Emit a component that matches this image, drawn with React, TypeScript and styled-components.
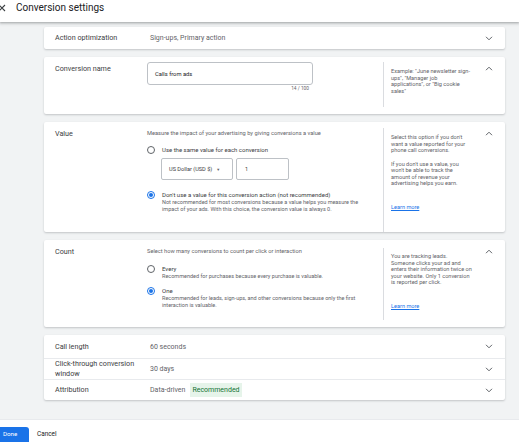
import React, { FunctionComponent, ReactElement, ReactNode } from 'react';
import styled, { createGlobalStyle } from 'styled-components';

const GlobalStyle = createGlobalStyle`
  html, body {
    margin: 0;
    padding: 0;
    background: #ffffff;
  }
  body {
    font-family: Roboto, "Liberation Sans", Arial, sans-serif;
    color: #202124;
    -webkit-font-smoothing: antialiased;
  }
`;

const Page = styled.div`
  width: 519px;
  height: 442px;
  display: flex;
  flex-direction: column;
  overflow: hidden;
  background: #f1f3f4;
`;

const Header = styled.header`
  height: 22px;
  flex-shrink: 0;
  background: #ffffff;
  display: flex;
  align-items: center;
  gap: 10px;
  box-shadow: 0 1px 2px rgba(60, 64, 67, 0.3), 0 1px 3px 1px rgba(60, 64, 67, 0.15);
  position: relative;
  z-index: 1;
`;

const CloseIcon = styled.svg`
  width: 8px;
  height: 8px;
  margin-left: -2px;
  margin-top: -7px;
`;

const Title = styled.h1`
  margin: -8px 0 0 0;
  font-size: 10px;
  font-weight: 400;
  color: #202124;
`;

const Content = styled.main`
  flex: 1;
  padding: 5px 0 0 44px;
  display: flex;
  flex-direction: column;
  gap: 8px;
`;

const Card = styled.section<{ $height: number }>`
  width: 461px;
  height: ${({ $height }): number => $height}px;
  box-sizing: border-box;
  background: #ffffff;
  border-radius: 2px;
  box-shadow: 0 1px 2px rgba(60, 64, 67, 0.25);
`;

const SummaryRow = styled.div<{ $height: number; $border?: boolean }>`
  height: ${({ $height }): number => $height}px;
  display: grid;
  grid-template-columns: 106px 1fr 30px;
  align-items: center;
  border-top: ${({ $border }): string => ($border ? '1px solid #e8eaed' : 'none')};
  box-sizing: border-box;
`;

const RowLabel = styled.div`
  padding-left: 11px;
  font-size: 7.2px;
  line-height: 10px;
  color: #3c4043;
`;

const RowValue = styled.div`
  font-size: 7px;
  color: #5f6368;
  display: flex;
  align-items: center;
  gap: 5px;
`;

const Badge = styled.span`
  background: #e6f4ea;
  color: #137333;
  padding: 3px 2px;
  font-size: 7px;
`;

const ChevronBox = styled.div<{ $top?: number }>`
  display: flex;
  justify-content: center;
  align-self: ${({ $top }): string => ($top !== undefined ? 'start' : 'center')};
  padding-top: ${({ $top }): number => $top ?? 0}px;
  padding-right: 2px;
`;

const ChevronIcon = styled.svg`
  width: 8px;
  height: 5px;
`;

const Expanded = styled.div`
  height: 100%;
  display: grid;
  grid-template-columns: 103px 236px 92px 30px;
`;

const ExpandedLabel = styled.div<{ $top: number }>`
  padding: ${({ $top }): number => $top}px 0 0 11px;
  font-size: 7.2px;
  color: #3c4043;
`;

const Main = styled.div<{ $top: number }>`
  padding: ${({ $top }): number => $top}px 16px 0 0;
  display: flex;
  flex-direction: column;
`;

const Side = styled.aside<{ $top: number; $bottom: number }>`
  margin: ${({ $top }): number => $top}px 0 ${({ $bottom }): number => $bottom}px 0;
  border-left: 1px solid #dadce0;
  padding: 0 3px 0 7px;
  display: flex;
  flex-direction: column;
  gap: 7px;
`;

const SideText = styled.p<{ $offset?: number; $width?: number }>`
  margin: ${({ $offset }): number => $offset ?? 0}px 0 0 0;
  max-width: ${({ $width }): string => ($width ? `${$width}px` : 'none')};
  font-size: 5.6px;
  line-height: 6.5px;
  color: #5f6368;
`;

const LearnMore = styled.a`
  font-size: 5.6px;
  line-height: 7px;
  color: #1a73e8;
  text-decoration: underline;
`;

const TextBox = styled.div`
  width: 166px;
  height: 23px;
  box-sizing: border-box;
  border: 1px solid #bdc1c6;
  border-radius: 3px;
  display: flex;
  align-items: center;
  padding-left: 7px;
  font-size: 5.8px;
  color: #202124;
`;

const Counter = styled.div`
  width: 162px;
  text-align: right;
  margin-top: 1px;
  font-size: 4.8px;
  color: #5f6368;
`;

const Description = styled.div`
  font-size: 5.7px;
  line-height: 8px;
  color: #5f6368;
`;

const Option = styled.div<{ $gap: number }>`
  margin-top: ${({ $gap }): number => $gap}px;
  display: grid;
  grid-template-columns: 15px 1fr;
  align-items: start;
`;

const Radio = styled.span<{ $checked?: boolean }>`
  width: 8px;
  height: 8px;
  box-sizing: border-box;
  border-radius: 50%;
  border: 1px solid ${({ $checked }): string => ($checked ? '#1a73e8' : '#5f6368')};
  display: flex;
  align-items: center;
  justify-content: center;
  margin-top: 0.5px;
  &::after {
    content: '';
    width: 4px;
    height: 4px;
    border-radius: 50%;
    background: ${({ $checked }): string => ($checked ? '#1a73e8' : 'transparent')};
  }
`;

const OptionTitle = styled.div`
  font-size: 6px;
  line-height: 9px;
  color: #3c4043;
`;

const OptionHint = styled.div`
  font-size: 5.5px;
  line-height: 7px;
  color: #5f6368;
`;

const ValueInputs = styled.div`
  margin: 4px 0 0 14px;
  display: flex;
  gap: 3px;
`;

const Select = styled.div`
  width: 72px;
  height: 22px;
  box-sizing: border-box;
  border: 1px solid #bdc1c6;
  border-radius: 2px;
  display: flex;
  align-items: center;
  padding-left: 7px;
  gap: 4px;
  font-size: 5.6px;
  color: #3c4043;
`;

const Caret = styled.span`
  font-size: 4px;
  color: #5f6368;
`;

const NumberBox = styled.div`
  width: 53px;
  height: 22px;
  box-sizing: border-box;
  border: 1px solid #bdc1c6;
  border-radius: 2px;
  display: flex;
  align-items: center;
  padding-left: 8px;
  font-size: 5.6px;
  color: #3c4043;
`;

const Footer = styled.footer`
  height: 22px;
  flex-shrink: 0;
  background: #ffffff;
  border-top: 1px solid #e8eaed;
  display: flex;
  align-items: flex-end;
  gap: 8px;
`;

const DoneButton = styled.button`
  margin-left: -6px;
  width: 35px;
  flex-shrink: 0;
  height: 15px;
  border: none;
  border-radius: 3px 3px 0 0;
  background: #1a73e8;
  color: #ffffff;
  font-family: inherit;
  font-size: 6.2px;
  text-align: left;
  padding: 0 0 1px 9px;
`;

const CancelButton = styled.button`
  height: 15px;
  border: none;
  background: transparent;
  color: #202124;
  font-family: inherit;
  font-size: 6.4px;
  padding: 0 0 1px 0;
`;

const Chevron: FunctionComponent<{ up?: boolean }> = function ({ up }): ReactElement {
  return (
    <ChevronIcon viewBox='0 0 8 5'>
      <path
        d={ up ? 'M1 4.2 L4 1.2 L7 4.2' : 'M1 0.8 L4 3.8 L7 0.8' }
        fill='none'
        stroke='#5f6368'
        strokeWidth='1'
      />
    </ChevronIcon>
  );
};

const RadioOption: FunctionComponent<{ checked?: boolean; gap: number; title: string; hint?: ReactNode }> =
  function ({ checked, gap, title, hint }): ReactElement {
    return (
      <Option $gap={ gap }>
        <Radio $checked={ checked } />
        <div>
          <OptionTitle>{ title }</OptionTitle>
          { hint && <OptionHint>{ hint }</OptionHint> }
        </div>
      </Option>
    );
  };

const App: FunctionComponent = function (): ReactElement {
  return (
    <>
      <GlobalStyle />
      <Page>
        <Header>
          <CloseIcon viewBox='0 0 8 8'>
            <path d='M1 1 L7 7 M7 1 L1 7' stroke='#3c4043' strokeWidth='1.1' />
          </CloseIcon>
          <Title>Conversion settings</Title>
        </Header>

        <Content>
          <Card $height={ 22 }>
            <SummaryRow $height={ 22 }>
              <RowLabel>Action optimization</RowLabel>
              <RowValue>Sign-ups, Primary action</RowValue>
              <ChevronBox><Chevron /></ChevronBox>
            </SummaryRow>
          </Card>

          <Card $height={ 57 }>
            <Expanded>
              <ExpandedLabel $top={ 7 }>Conversion name</ExpandedLabel>
              <Main $top={ 5 }>
                <TextBox>Calls from ads</TextBox>
                <Counter>14 / 100</Counter>
              </Main>
              <Side $top={ 5 } $bottom={ 7 }>
                <SideText $offset={ 6 } $width={ 79 }>
                  Example: "June newsletter sign-ups", "Manager job applications", or "Big cookie sales"
                </SideText>
              </Side>
              <ChevronBox $top={ 9 }><Chevron up /></ChevronBox>
            </Expanded>
          </Card>

          <Card $height={ 110 }>
            <Expanded>
              <ExpandedLabel $top={ 7 }>Value</ExpandedLabel>
              <Main $top={ 7 }>
                <Description>Measure the impact of your advertising by giving conversions a value</Description>
                <RadioOption gap={ 8 } title='Use the same value for each conversion' />
                <ValueInputs>
                  <Select>US Dollar (USD $) <Caret>▼</Caret></Select>
                  <NumberBox>1</NumberBox>
                </ValueInputs>
                <RadioOption
                  checked
                  gap={ 10 }
                  title="Don't use a value for this conversion action (not recommended)"
                  hint='Not recommended for most conversions because a value helps you measure the impact of your ads. With this choice, the conversion value is always 0.'
                />
              </Main>
              <Side $top={ 6 } $bottom={ 0 }>
                <SideText $offset={ 6 }>
                  Select this option if you don't want a value reported for your phone call conversions.
                </SideText>
                <SideText>
                  If you don't use a value, you won't be able to track the amount of revenue your advertising helps you earn.
                </SideText>
                <div><LearnMore href='#'>Learn more</LearnMore></div>
              </Side>
              <ChevronBox $top={ 9 }><Chevron up /></ChevronBox>
            </Expanded>
          </Card>

          <Card $height={ 87 }>
            <Expanded>
              <ExpandedLabel $top={ 7 }>Count</ExpandedLabel>
              <Main $top={ 7 }>
                <Description>Select how many conversions to count per click or interaction</Description>
                <RadioOption
                  gap={ 9 }
                  title='Every'
                  hint='Recommended for purchases because every purchase is valuable.'
                />
                <RadioOption
                  checked
                  gap={ 6 }
                  title='One'
                  hint='Recommended for leads, sign-ups, and other conversions because only the first interaction is valuable.'
                />
              </Main>
              <Side $top={ 8 } $bottom={ 7 }>
                <SideText $offset={ 5 }>
                  You are tracking leads. Someone clicks your ad and enters their information twice on your website. Only 1 conversion is reported per click.
                </SideText>
                <div><LearnMore href='#'>Learn more</LearnMore></div>
              </Side>
              <ChevronBox $top={ 9 }><Chevron up /></ChevronBox>
            </Expanded>
          </Card>

          <Card $height={ 65 }>
            <SummaryRow $height={ 23 }>
              <RowLabel>Call length</RowLabel>
              <RowValue>60 seconds</RowValue>
              <ChevronBox><Chevron /></ChevronBox>
            </SummaryRow>
            <SummaryRow $height={ 21 } $border>
              <RowLabel>Click-through conversion window</RowLabel>
              <RowValue>30 days</RowValue>
              <ChevronBox><Chevron /></ChevronBox>
            </SummaryRow>
            <SummaryRow $height={ 21 } $border>
              <RowLabel>Attribution</RowLabel>
              <RowValue>Data-driven <Badge>Recommended</Badge></RowValue>
              <ChevronBox><Chevron /></ChevronBox>
            </SummaryRow>
          </Card>
        </Content>

        <Footer>
          <DoneButton>Done</DoneButton>
          <CancelButton>Cancel</CancelButton>
        </Footer>
      </Page>
    </>
  );
};

export default App;
